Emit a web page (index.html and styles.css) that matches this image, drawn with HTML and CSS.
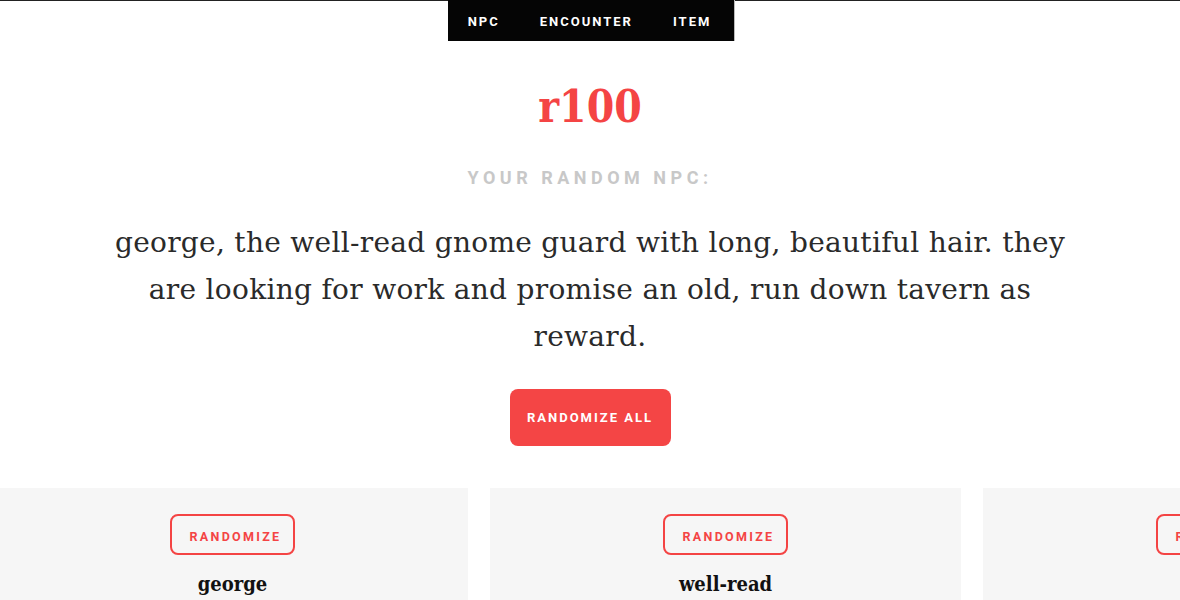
FILE: index.html
```html
<!DOCTYPE html>
<html>
<head>
<meta charset="utf-8">
<link rel="stylesheet" href="styles.css">
</head>
<body>
<div class="page">
  <nav class="nav">
    <a class="nav-item">NPC</a>
    <a class="nav-item">ENCOUNTER</a>
    <a class="nav-item">ITEM</a>
  </nav>
  <h1 class="title">r100</h1>
  <h2 class="subtitle">YOUR RANDOM NPC:</h2>
  <p class="result">george, the well-read gnome guard with long, beautiful hair. they are looking for work and promise an old, run down tavern as reward.</p>
  <button class="btn-all">RANDOMIZE ALL</button>
  <div class="cards">
    <div class="card">
      <button class="btn-one">RANDOMIZE</button>
      <div class="card-value">george</div>
    </div>
    <div class="card">
      <button class="btn-one">RANDOMIZE</button>
      <div class="card-value">well-read</div>
    </div>
    <div class="card">
      <button class="btn-one">RANDOMIZE</button>
      <div class="card-value">gnome</div>
    </div>
  </div>
</div>
</body>
</html>
```
FILE: styles.css
```css
html, body {
  margin: 0;
  padding: 0;
  background: #ffffff;
  overflow: hidden;
}
.page {
  border-top: 1px solid #222;
  display: flex;
  flex-direction: column;
  align-items: center;
  font-family: Roboto, "Liberation Sans", sans-serif;
}
.nav {
  display: flex;
  gap: 40px;
  background: #050505;
  height: 40px;
  align-items: center;
  padding: 1px 23px 0 20px;
  margin-top: -1px;
  margin-left: 2px;
  box-shadow: 1px 0 0 #bbb;
}
.nav-item {
  color: #fff;
  font-weight: 700;
  font-size: 13px;
  letter-spacing: 2px;
}
.title {
  margin: 37px 0 0;
  font-family: "DejaVu Serif Condensed", "DejaVu Serif", serif;
  font-stretch: condensed;
  font-weight: 700;
  font-size: 44px;
  line-height: 58px;
  color: #f44444;
}
.subtitle {
  margin: 31px 0 0;
  font-size: 18px;
  line-height: 22px;
  font-weight: 700;
  letter-spacing: 4.5px;
  color: #c8c8c8;
}
.result {
  margin: 30px 0 0;
  max-width: 980px;
  text-align: center;
  font-family: "DejaVu Serif", serif;
  font-weight: 300;
  font-size: 28px;
  line-height: 47px;
  letter-spacing: 0.3px;
  color: #2a2a2a;
}
.btn-all {
  margin-top: 29px;
  width: 161px;
  height: 57px;
  border: none;
  border-radius: 8px;
  background: #f44545;
  color: #fff;
  font-family: Roboto, "Liberation Sans", sans-serif;
  font-weight: 700;
  font-size: 13px;
  letter-spacing: 2px;
}
.cards {
  align-self: flex-start;
  margin-top: 42px;
  margin-left: -3px;
  display: flex;
  gap: 22px;
}
.card {
  flex: 0 0 471px;
  height: 200px;
  background: #f6f6f6;
  display: flex;
  flex-direction: column;
  align-items: center;
  padding-top: 26px;
  box-sizing: border-box;
}
.btn-one {
  width: 125px;
  height: 41px;
  border: 2px solid #f44444;
  border-radius: 8px;
  background: transparent;
  color: #f44444;
  font-family: Roboto, "Liberation Sans", sans-serif;
  font-weight: 700;
  font-size: 12.5px;
  letter-spacing: 2.3px;
  padding: 4px 0 0 6px;
}
.card-value {
  margin-top: 17px;
  font-family: "DejaVu Serif Condensed", "DejaVu Serif", serif;
  font-stretch: condensed;
  font-weight: 700;
  font-size: 20px;
  color: #111;
}
```
